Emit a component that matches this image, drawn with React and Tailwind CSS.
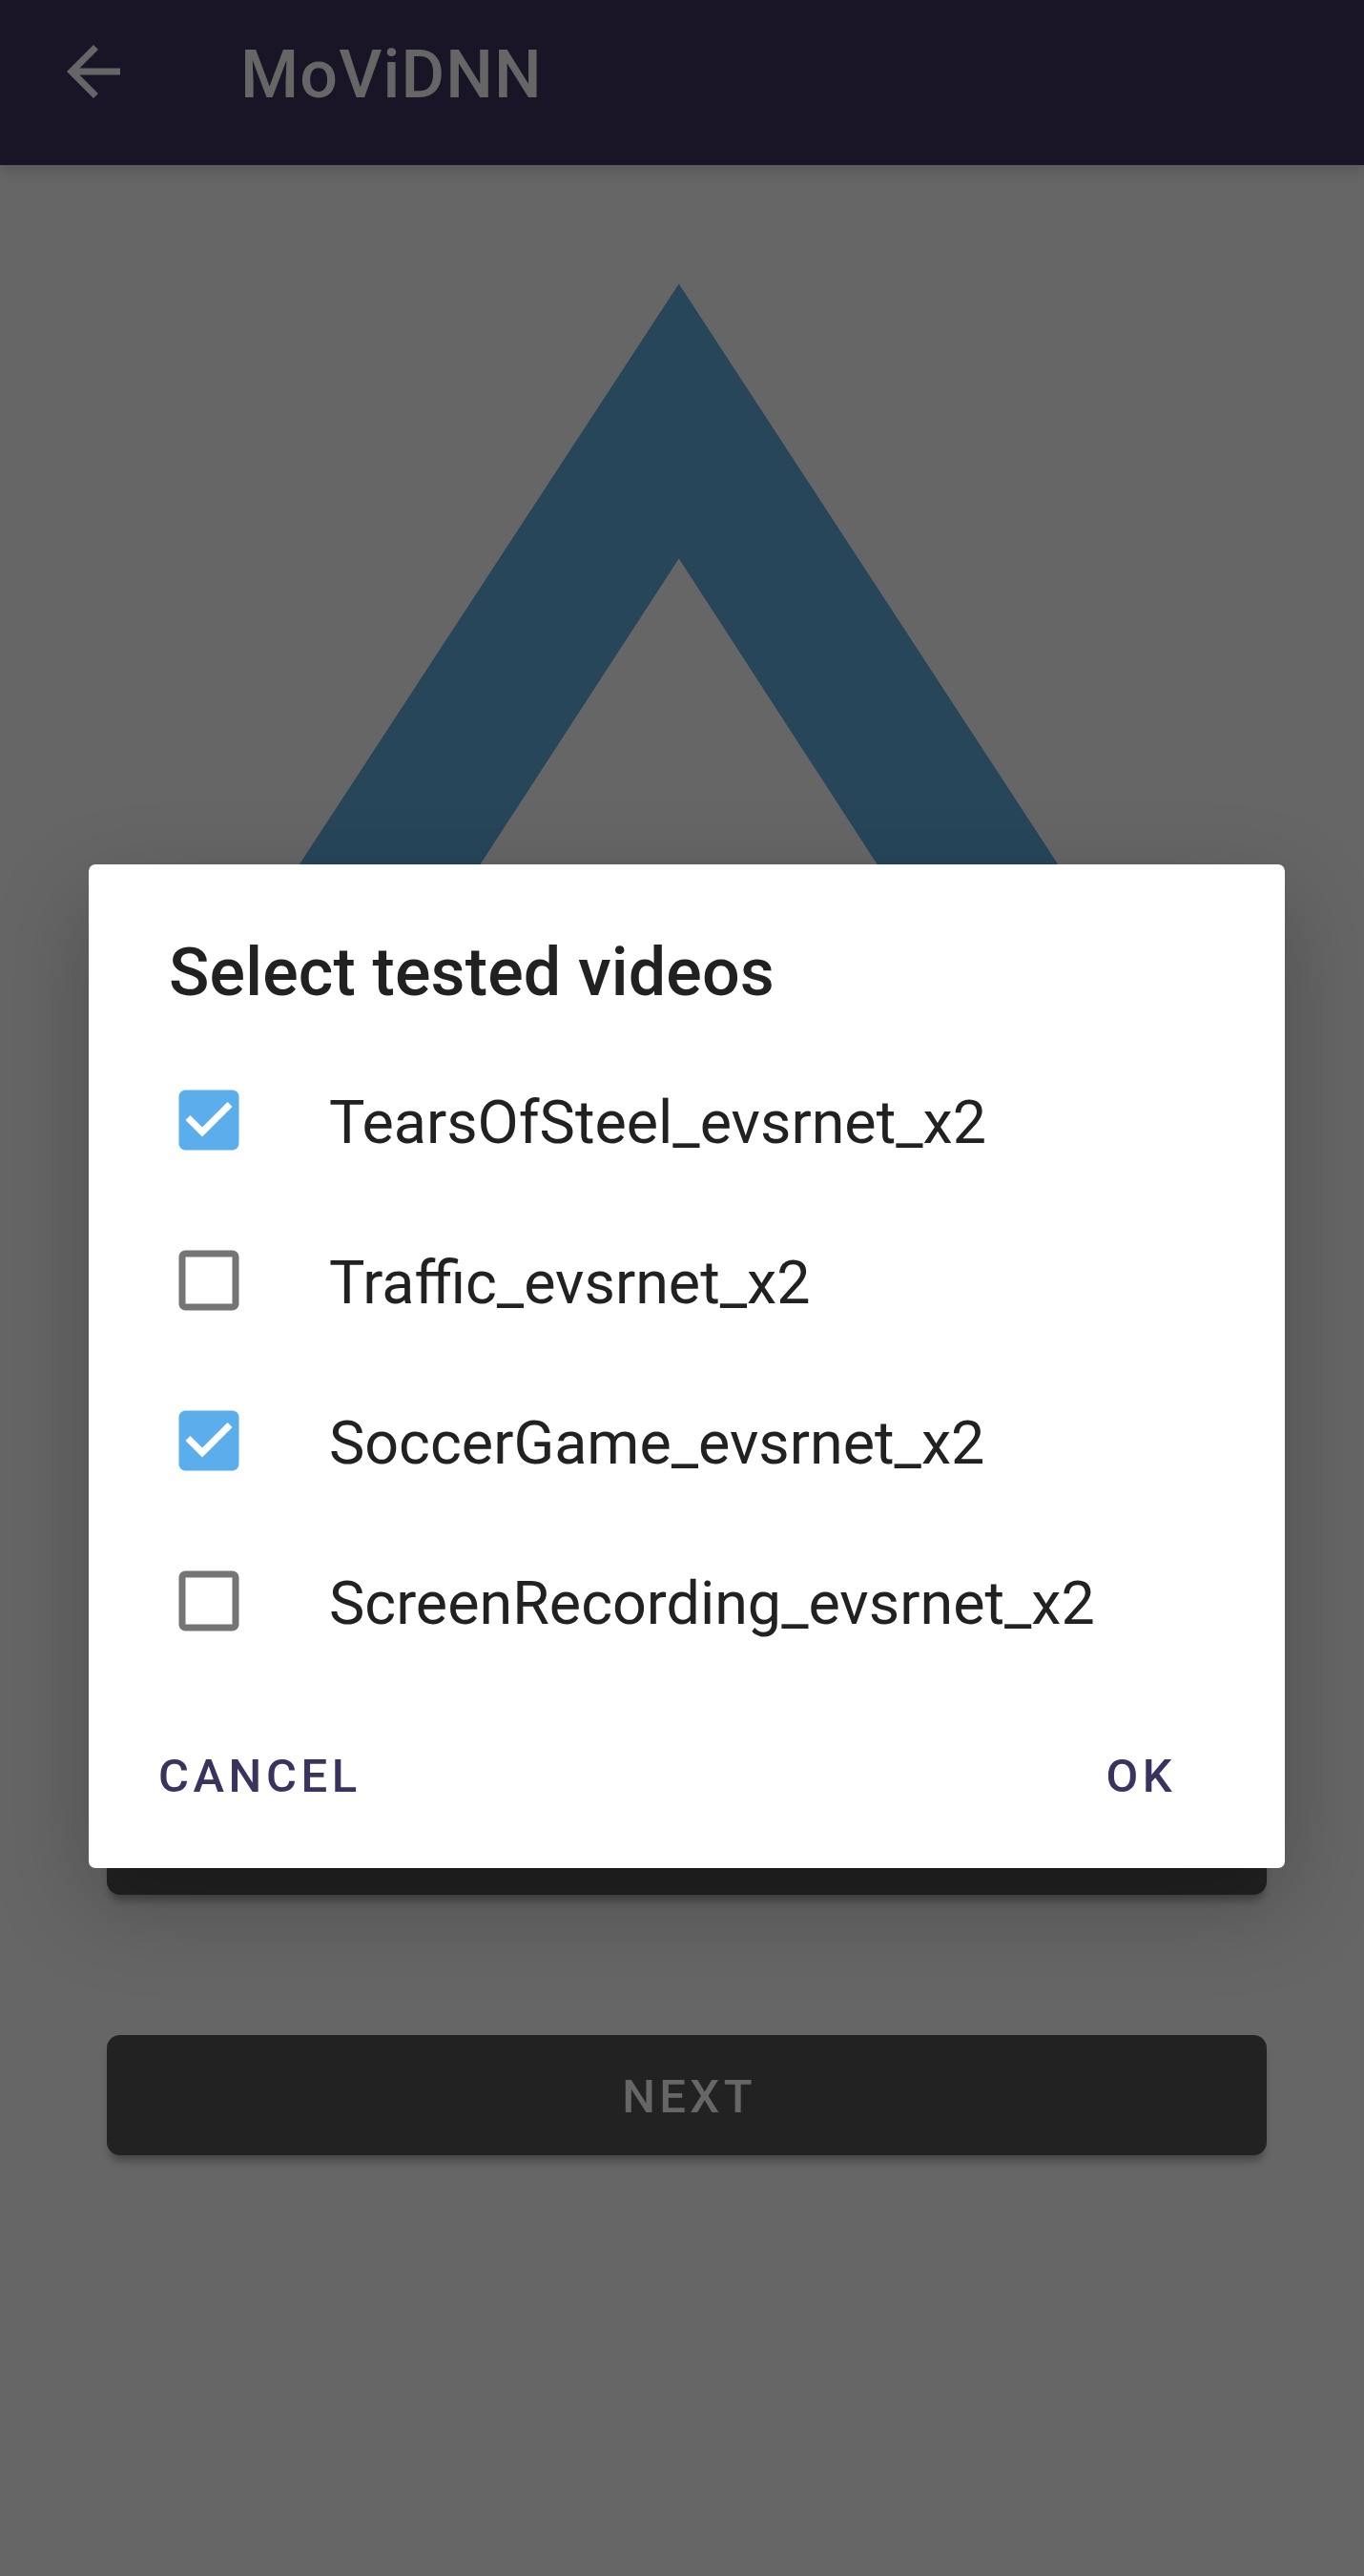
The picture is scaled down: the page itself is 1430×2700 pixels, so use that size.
import React, { useState } from "react";

const VIDEOS = [
  { name: "TearsOfSteel_evsrnet_x2", checked: true },
  { name: "Traffic_evsrnet_x2", checked: false },
  { name: "SoccerGame_evsrnet_x2", checked: true },
  { name: "ScreenRecording_evsrnet_x2", checked: false },
];

function BackArrow() {
  return (
    <svg viewBox="0 0 24 24" className="size-[84px] shrink-0 fill-[#666666]">
      <path d="M20 11H7.83l5.59-5.59L12 4l-8 8 8 8 1.41-1.41L7.83 13H20v-2z" />
    </svg>
  );
}

function CheckIcon({ checked }) {
  return checked ? (
    <svg viewBox="0 0 24 24" className="size-[84px] shrink-0">
      <rect x="3" y="3" width="18" height="18" rx="2" fill="#5badec" />
      <path d="M10 17l-5-5 1.41-1.41L10 14.17l7.59-7.59L19 8l-9 9z" fill="#ffffff" />
    </svg>
  ) : (
    <svg viewBox="0 0 24 24" className="size-[84px] shrink-0">
      <path
        d="M19 5v14H5V5h14m0-2H5c-1.1 0-2 .9-2 2v14c0 1.1.9 2 2 2h14c1.1 0 2-.9 2-2V5c0-1.1-.9-2-2-2z"
        fill="#757575"
      />
    </svg>
  );
}

function VideoRow({ name, checked, onToggle }) {
  return (
    <button
      type="button"
      role="checkbox"
      aria-checked={checked}
      onClick={onToggle}
      className="flex h-[168px] w-full items-center pl-[84px] text-left"
    >
      <CheckIcon checked={checked} />
      <span className="ml-[84px] pt-[5px] text-[62.8px] leading-[74px] text-[#212121]">{name}</span>
    </button>
  );
}

export default function App() {
  const [videos, setVideos] = useState(VIDEOS);
  const toggle = (index) =>
    setVideos(videos.map((v, i) => (i === index ? { ...v, checked: !v.checked } : v)));

  return (
    <div className="relative h-[2700px] w-[1430px] overflow-hidden bg-[#666666] font-['Roboto',sans-serif]">
      <header className="flex h-[173px] items-center bg-[#191526] pb-[23px] pl-[56px] shadow-[0_6px_14px_rgba(0,0,0,0.14)]">
        <BackArrow />
        <h1 className="ml-[112px] pt-[6px] text-[70px] leading-[82px] font-medium tracking-[0.016em] text-[#666666]">
          MoViDNN
        </h1>
      </header>

      <main className="flex flex-col items-center pt-[124px]">
        <svg viewBox="0 0 1430 700" className="h-[700px] w-full" fill="#27465a">
          <path d="M711.7 0.5 L1174.5 709 H984.5 L711.7 288.5 L438.5 709 H248.5 Z" />
        </svg>
        <div className="mt-[863px] mr-[-10px] h-[126px] w-[1216px] rounded-[14px] bg-[#222222] shadow-[0_9px_9px_-3px_rgba(0,0,0,0.3)]" />
        <button
          type="button"
          className="mt-[147px] mr-[-10px] h-[126px] w-[1216px] rounded-[14px] bg-[#222222] pt-[4px] pl-[5px] text-[49px] leading-[58px] font-medium tracking-[0.0893em] text-[#666666] shadow-[0_9px_9px_-3px_rgba(0,0,0,0.3)]"
        >
          NEXT
        </button>
      </main>

      <div
        role="dialog"
        className="absolute top-[906px] left-[93px] flex h-[1052px] w-[1254px] flex-col rounded-[7px] bg-white pt-[72px] shadow-[0_36px_100px_rgba(0,0,0,0.24)]"
      >
        <h2 className="pl-[84px] text-[70px] leading-[82px] font-medium tracking-[0.002em] text-[#212121]">
          Select tested videos
        </h2>
        <div className="mt-[30px] flex flex-col">
          {videos.map((v, i) => (
            <VideoRow key={v.name} {...v} onToggle={() => toggle(i)} />
          ))}
        </div>
        <div className="mt-[71px] flex items-center justify-between pr-[114px] pl-[73px] text-[49px] leading-[58px] font-medium tracking-[0.0893em] text-[#3b335f]">
          <button type="button" className="tracking-[0.093em]">CANCEL</button>
          <button type="button">OK</button>
        </div>
      </div>
    </div>
  );
}
